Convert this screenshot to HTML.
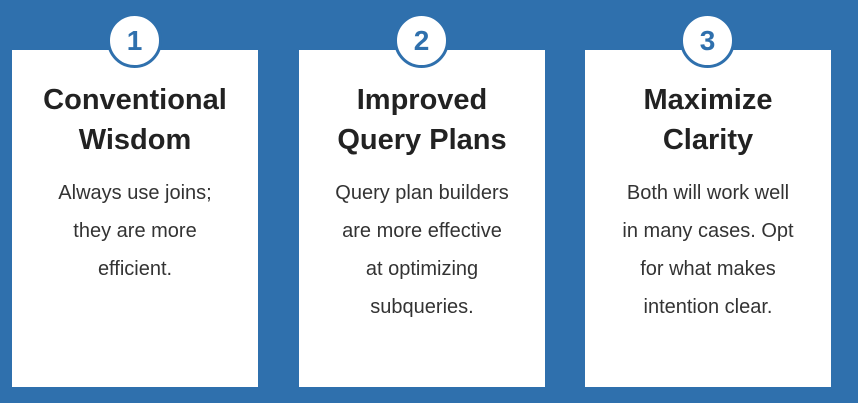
<!DOCTYPE html>
<html><head><style>
body{margin:0;width:858px;height:403px;background:#2f70ad;position:relative;overflow:hidden;font-family:"Liberation Sans",sans-serif}
.card{position:absolute;top:50px;width:246px;height:337px;background:#fff;text-align:center}
.circ{position:absolute;top:13px;width:55px;height:55px;border:3px solid #2f70ad;border-radius:50%;background:#fff;box-sizing:border-box;color:#2f70ad;font-size:28px;font-weight:bold;line-height:49px;text-align:center;z-index:2}
h2{margin:30px 0 0;font-size:29px;line-height:40px;color:#222;font-weight:bold}
p{margin:14px 0 0;font-size:20px;line-height:38px;color:#333}
</style></head><body>
<div class="circ" style="left:107px">1</div>
<div class="circ" style="left:394px">2</div>
<div class="circ" style="left:680px">3</div>
<div class="card" style="left:12px"><h2>Conventional<br>Wisdom</h2><p>Always use joins;<br>they are more<br>efficient.</p></div>
<div class="card" style="left:299px"><h2>Improved<br>Query Plans</h2><p>Query plan builders<br>are more effective<br>at optimizing<br>subqueries.</p></div>
<div class="card" style="left:585px"><h2>Maximize<br>Clarity</h2><p>Both will work well<br>in many cases. Opt<br>for what makes<br>intention clear.</p></div>
</body></html>
